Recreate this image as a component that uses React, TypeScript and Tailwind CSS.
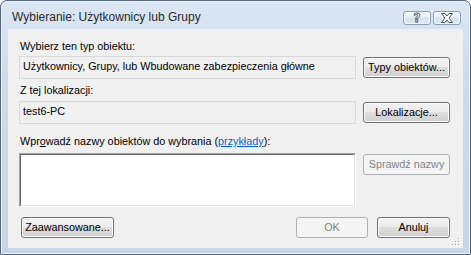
import React from "react";

const btn =
  "flex items-center justify-center h-[21px] rounded-[3px] border border-[#707070] bg-[linear-gradient(to_bottom,#f2f2f2_0%,#ebebeb_50%,#dddddd_50%,#cfcfcf_100%)] shadow-[inset_0_0_0_1px_#fcfcfc] text-black whitespace-nowrap";
const btnOff =
  "flex items-center justify-center h-[21px] rounded-[3px] border border-[#adb2b5] bg-[#f4f4f4] text-[#838383] whitespace-nowrap";
const capBtn =
  "flex items-center justify-center w-[28px] h-[14px] rounded-[3px] border border-[#8e9db0] bg-[linear-gradient(to_bottom,#f4f8fc_0%,#e3eaf3_50%,#d6e1ee_50%,#dde7f2_100%)] shadow-[inset_0_0_0_1px_#f4f8fd]";

function ReadOnlyBox({ value }: { value: string }) {
  return (
    <div className="flex items-center w-[337px] h-[23px] border border-[#d9d9d9] bg-[#f0f0f0] pl-[3px] pb-[2px]">
      {value}
    </div>
  );
}

function Gripper() {
  const dots = [
    [6, 0],
    [3, 3],
    [6, 3],
    [0, 6],
    [3, 6],
    [6, 6],
  ];
  return (
    <svg width="8" height="8" viewBox="0 0 8 8" className="absolute right-[3px] bottom-[2px]">
      {dots.map(([x, y], i) => (
        <g key={i}>
          <rect x={x + 1} y={y + 1} width="1" height="1" fill="#ffffff" />
          <rect x={x} y={y} width="1" height="1" fill="#a0a0a0" />
        </g>
      ))}
    </svg>
  );
}

export default function App() {
  return (
    <div className="w-[471px] h-[255px] overflow-hidden bg-white">
      <div className="flex flex-col w-[471px] h-[255px] rounded-t-[7px] border border-[#56667a] bg-[linear-gradient(to_bottom,#dbe6f3_0%,#ccdcee_30%,#c6d7ea_100%)] shadow-[inset_0_0_0_1px_#e9f0f8] font-['Liberation_Sans',Arial,sans-serif] text-[10.8px] leading-[13px] text-black">
        {/* title bar */}
        <div className="flex items-start justify-between h-[28px] pl-[11px] pr-[9px]">
          <span className="mt-[9px] text-[12px] leading-[15px] text-[#2a2a2a]">
            Wybieranie: Użytkownicy lub Grupy
          </span>
          <div className="flex gap-[2px] mt-[10px]">
            <div className={capBtn}>
              <span className="font-['DejaVu_Sans',sans-serif] font-bold text-[12px] leading-[12px] text-white [-webkit-text-stroke:0.8px_#4a586b]">
                ?
              </span>
            </div>
            <div className={capBtn}>
              <svg width="14" height="10" viewBox="0 0 14 10">
                <path
                  d="M1.5 0.5 H5 L7 3 L9 0.5 H12.5 L9 5 L12.5 9.5 H9 L7 7 L5 9.5 H1.5 L5 5 Z"
                  fill="#ffffff"
                  stroke="#4a586b"
                  strokeWidth="1"
                  strokeLinejoin="round"
                />
              </svg>
            </div>
          </div>
        </div>

        {/* client area */}
        <div className="relative flex flex-col mx-[7px] w-[455px] h-[219px] bg-[#f0f0f0]">
          <div className="mt-[11px] ml-[12px]">Wybierz ten typ obiektu:</div>
          <div className="flex items-center gap-[7px] mt-[3px] ml-[11px]">
            <ReadOnlyBox value="Użytkownicy, Grupy, lub Wbudowane zabezpieczenia główne" />
            <div className={`${btn} w-[87px]`}>Typy obiektów...</div>
          </div>

          <div className="mt-[5px] ml-[12px]">Z tej lokalizacji:</div>
          <div className="flex items-center gap-[7px] mt-[4px] ml-[11px]">
            <ReadOnlyBox value="test6-PC" />
            <div className={`${btn} w-[87px]`}>Lokalizacje...</div>
          </div>

          <div className="mt-[11px] ml-[12px]">
            Wpr<span className="underline">o</span>wadź nazwy obiektów do wybrania (
            <span className="text-[#0066cc] underline">przykłady</span>):
          </div>
          <div className="flex items-start gap-[7px] mt-[5px] ml-[11px]">
            <div className="w-[337px] h-[54px] border border-t-[#a0a0a0] border-l-[#a0a0a0] border-r-white border-b-white">
              <div className="w-full h-full border border-t-[#696969] border-l-[#696969] border-r-[#e3e3e3] border-b-[#e3e3e3] bg-white" />
            </div>
            <div className={`${btnOff} w-[87px] mt-[1px]`}>Sprawdź nazwy</div>
          </div>

          <div className="flex items-center mt-[10px] ml-[13px] mr-[13px]">
            <div className={`${btn} w-[93px]`}>Zaawansowane...</div>
            <div className="flex-1" />
            <div className={`${btnOff} w-[72px]`}>OK</div>
            <div className={`${btn} w-[73px] ml-[9px]`}>Anuluj</div>
          </div>
          <Gripper />
        </div>
      </div>
    </div>
  );
}
